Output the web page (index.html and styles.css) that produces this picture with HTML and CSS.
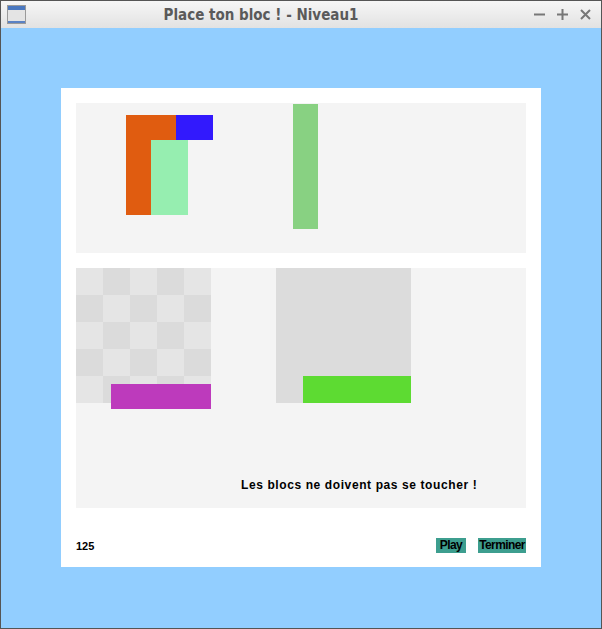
FILE: index.html
```html
<!DOCTYPE html>
<html>
<head>
<meta charset="utf-8">
<link rel="stylesheet" href="styles.css">
</head>
<body>
<div class="window">
  <div class="titlebar">
    <svg class="app-icon" width="19" height="19" viewBox="0 0 19 19">
      <rect x="0.5" y="0.5" width="18" height="18" fill="#e4e4e4" stroke="#9a9a9a"/>
      <rect x="1" y="1" width="17" height="4" fill="#4a78c0"/>
      <rect x="1" y="16" width="17" height="2" fill="#5a82c4"/>
    </svg>
    <div class="title">Place ton bloc ! - Niveau1</div>
    <div class="controls">
      <svg width="11" height="11" viewBox="0 0 11 11"><path d="M0 5.5H11" stroke="#777" stroke-width="2"/></svg>
      <svg width="11" height="11" viewBox="0 0 11 11"><path d="M0 5.5H11M5.5 0V11" stroke="#777" stroke-width="2"/></svg>
      <svg width="11" height="11" viewBox="0 0 11 11"><path d="M1 1L10 10M10 1L1 10" stroke="#777" stroke-width="2"/></svg>
    </div>
  </div>
  <div class="content">
    <div class="board">
      <div class="panel panel-top">
        <div class="blk orange-a" style="left:50px;top:12px;width:50px;height:25px"></div>
        <div class="blk orange-a" style="left:50px;top:37px;width:25px;height:75px"></div>
        <div class="blk blue" style="left:100px;top:12px;width:37px;height:25px"></div>
        <div class="blk mint" style="left:75px;top:37px;width:37px;height:75px"></div>
        <div class="blk leaf" style="left:217px;top:1px;width:25px;height:125px"></div>
      </div>
      <div class="panel panel-bottom">
        <div class="checker" style="left:0;top:0">
          <i class="l"></i><i class="d"></i><i class="l"></i><i class="d"></i><i class="l"></i>
          <i class="d"></i><i class="l"></i><i class="d"></i><i class="l"></i><i class="d"></i>
          <i class="l"></i><i class="d"></i><i class="l"></i><i class="d"></i><i class="l"></i>
          <i class="d"></i><i class="l"></i><i class="d"></i><i class="l"></i><i class="d"></i>
          <i class="l"></i><i class="d"></i><i class="l"></i><i class="d"></i><i class="l"></i>
        </div>
        <div class="blk purple" style="left:35px;top:116px;width:100px;height:25px"></div>
        <div class="blk target" style="left:200px;top:0;width:135px;height:135px"></div>
        <div class="blk lime" style="left:227px;top:108px;width:108px;height:27px"></div>
        <div class="msg">Les blocs ne doivent pas se toucher !</div>
      </div>
      <div class="footer">
        <span class="score">125</span>
        <div class="buttons">
          <button class="btn btn-play">Play</button>
          <button class="btn btn-end">Terminer</button>
        </div>
      </div>
    </div>
  </div>
</div>
</body>
</html>
```
FILE: styles.css
```css
* { box-sizing: border-box; }
html, body { margin: 0; padding: 0; }
body { width: 602px; height: 629px; overflow: hidden; }
.window {
  width: 602px; height: 629px;
  border: 1px solid #555;
  display: flex; flex-direction: column;
  background: #92ceff;
}
.titlebar {
  height: 27px;
  background: linear-gradient(#f6f6f6, #e2e2e2);
  display: flex; align-items: center;
  position: relative;
  padding-left: 6px;
}
.app-icon { display: block; }
.title {
  position: absolute; left: 0; right: 80px; top: 0; bottom: 0;
  display: flex; align-items: center; justify-content: center;
  font-family: "DejaVu Sans Condensed", "DejaVu Sans", sans-serif; font-weight: bold; font-size: 15px;
  color: #5a5a5a;
  pointer-events: none;
}
.controls {
  margin-left: auto; margin-right: 10px;
  display: flex; gap: 12px; align-items: center;
}
.controls svg { display: block; }
.content {
  flex: 1;
  padding: 60px 0 0 60px;
}
.board {
  width: 480px; height: 479px;
  background: #fff;
  padding: 15px;
}
.panel { position: relative; background: #f4f4f4; width: 450px; }
.panel-top { height: 150px; }
.panel-bottom { height: 240px; margin-top: 15px; }
.blk { position: absolute; }
.orange-a { background: #e05c10; }
.blue { background: #3219fd; }
.mint { background: #96eeb0; }
.leaf { background: #88d182; }
.purple { background: #bd3abc; }
.target { background: #dcdcdc; }
.lime { background: #5ddb32; }
.checker {
  position: absolute; width: 135px; height: 135px;
  display: grid; grid-template-columns: repeat(5, 27px); grid-template-rows: repeat(5, 27px);
}
.checker i { display: block; }
.checker .l { background: #e5e5e5; }
.checker .d { background: #dbdbdb; }
.msg {
  position: absolute; left: 165px; top: 210px;
  font-family: "Liberation Sans", Arial, sans-serif; font-weight: bold; font-size: 12px;
  letter-spacing: 0.6px;
  color: #000; white-space: nowrap;
}
.footer {
  margin-top: 30px; height: 15px;
  display: flex; justify-content: space-between; align-items: center;
}
.score {
  font-family: "Liberation Sans", Arial, sans-serif; font-weight: bold; font-size: 11px;
  color: #000;
}
.buttons { display: flex; gap: 12px; }
.btn {
  border: 0; margin: 0; padding: 0;
  height: 15px;
  background: #3d9e8f;
  font-family: "Liberation Sans", Arial, sans-serif; font-weight: bold; font-size: 12px;
  letter-spacing: -0.6px;
  color: #000; line-height: 15px;
  white-space: nowrap; overflow: visible;
}
.btn-play { width: 30px; }
.btn-end { width: 48px; }
```
